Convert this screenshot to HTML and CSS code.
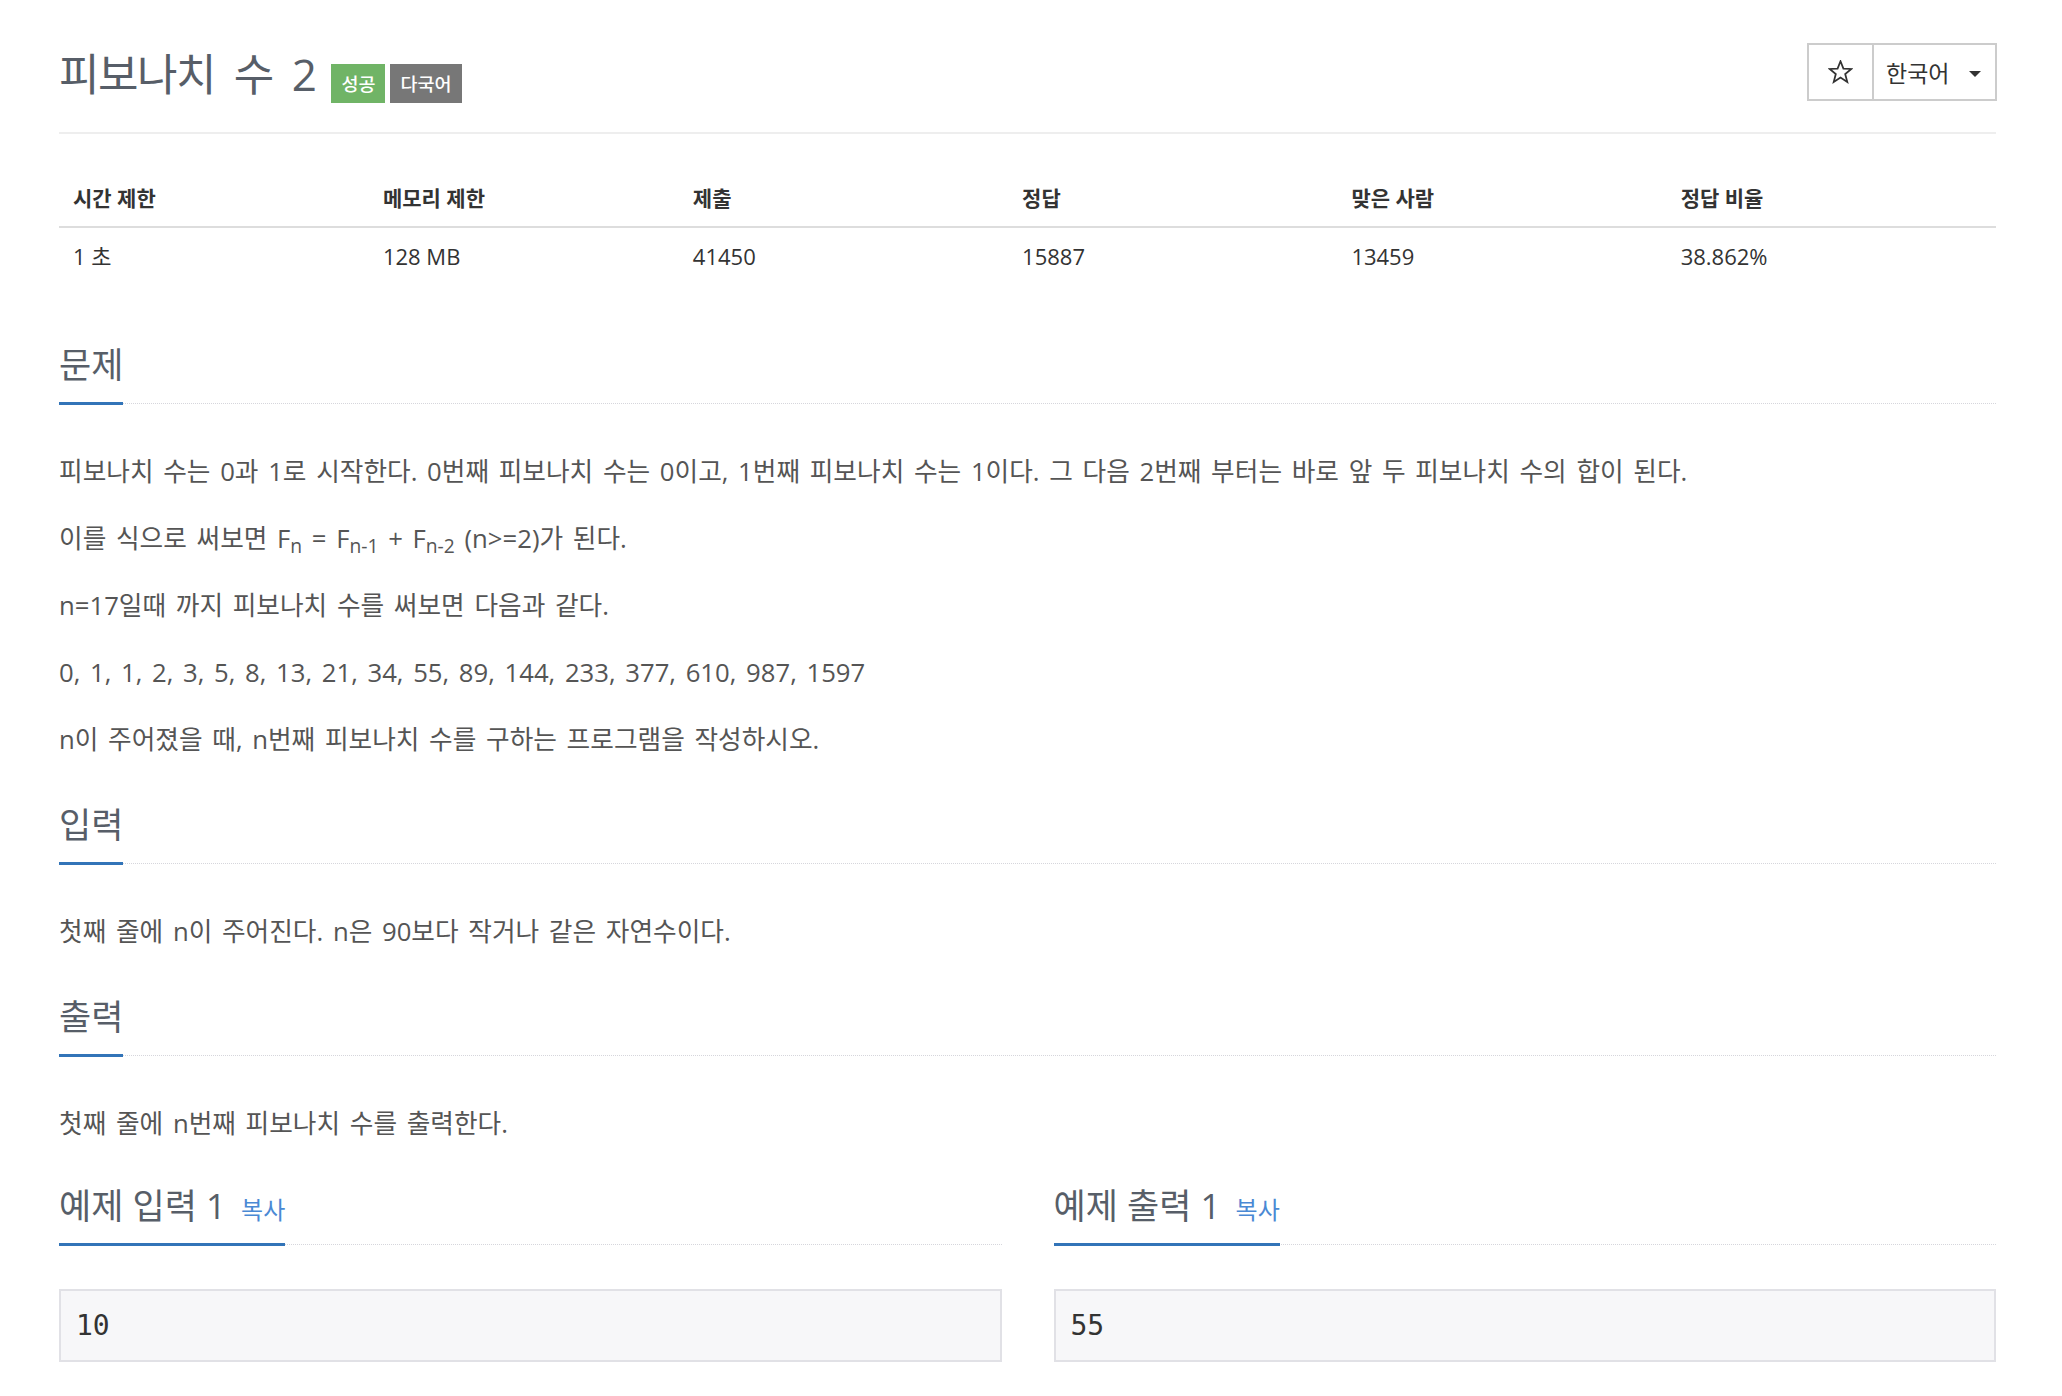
FILE: index.html
```html
<!DOCTYPE html>
<html lang="ko">
<head>
<meta charset="utf-8">
<title>피보나치 수 2</title>
<link rel="stylesheet" href="styles.css">
</head>
<body>
<div class="container">
  <div class="page-header">
    <h1 class="title">
      <span class="title-text">피보나치 수 2</span>
      <span class="badge badge-success">성공</span>
      <span class="badge badge-default">다국어</span>
    </h1>
    <div class="btn-group">
      <button class="btn btn-star" type="button" aria-label="즐겨찾기">
        <svg width="25" height="24" viewBox="0 0 24 23"><polygon points="12,1.2 14.8,8.2 22.4,8.6 16.5,13.5 18.5,21 12,16.8 5.5,21 7.5,13.5 1.6,8.6 9.2,8.2" fill="none" stroke="#333" stroke-width="1.7" stroke-linejoin="miter"/></svg>
      </button>
      <button class="btn btn-lang" type="button">한국어<span class="caret"></span></button>
    </div>
  </div>

  <table class="info">
    <thead>
      <tr>
        <th class="w16">시간 제한</th>
        <th class="w16">메모리 제한</th>
        <th class="w17">제출</th>
        <th class="w17">정답</th>
        <th class="w17">맞은 사람</th>
        <th class="w17">정답 비율</th>
      </tr>
    </thead>
    <tbody>
      <tr>
        <td>1 초</td>
        <td>128 MB</td>
        <td>41450</td>
        <td>15887</td>
        <td>13459</td>
        <td>38.862%</td>
      </tr>
    </tbody>
  </table>

  <section class="section first">
    <div class="headline"><h2>문제</h2></div>
    <div class="problem-text">
      <p>피보나치 수는 0과 1로 시작한다. 0번째 피보나치 수는 0이고, 1번째 피보나치 수는 1이다. 그 다음 2번째 부터는 바로 앞 두 피보나치 수의 합이 된다.</p>
      <p>이를 식으로 써보면 F<sub>n</sub> = F<sub>n-1</sub> + F<sub>n-2</sub> (n&gt;=2)가 된다.</p>
      <p>n=17일때 까지 피보나치 수를 써보면 다음과 같다.</p>
      <p>0, 1, 1, 2, 3, 5, 8, 13, 21, 34, 55, 89, 144, 233, 377, 610, 987, 1597</p>
      <p>n이 주어졌을 때, n번째 피보나치 수를 구하는 프로그램을 작성하시오.</p>
    </div>
  </section>

  <section class="section">
    <div class="headline"><h2>입력</h2></div>
    <div class="problem-text">
      <p>첫째 줄에 n이 주어진다. n은 90보다 작거나 같은 자연수이다.</p>
    </div>
  </section>

  <section class="section">
    <div class="headline"><h2>출력</h2></div>
    <div class="problem-text">
      <p>첫째 줄에 n번째 피보나치 수를 출력한다.</p>
    </div>
  </section>

  <div class="samples">
    <section class="sample">
      <div class="headline"><h2>예제 입력 1 <a class="copy" href="#">복사</a></h2></div>
      <pre class="sample-data">10</pre>
    </section>
    <section class="sample">
      <div class="headline"><h2>예제 출력 1 <a class="copy" href="#">복사</a></h2></div>
      <pre class="sample-data">55</pre>
    </section>
  </div>
</div>
</body>
</html>
```

FILE: styles.css
```css
* {
  box-sizing: border-box;
}

html, body {
  margin: 0;
  padding: 0;
  background: #ffffff;
}

body {
  font-family: "Open Sans", "Noto Sans CJK KR", sans-serif;
  color: #555555;
}

.container {
  margin-left: 59px;
  width: 1937px;
}

/* ---------- header ---------- */
.page-header {
  display: flex;
  justify-content: space-between;
  align-items: flex-start;
  padding: 46px 0 29px;
  border-bottom: 2px solid #eeeeee;
}

.title {
  display: flex;
  align-items: baseline;
  margin: 0;
  font-weight: 400;
}

.title-text {
  font-size: 44px;
  line-height: 56px;
  letter-spacing: -1.5px;
  word-spacing: 9px;
  color: #575e68;
}

.badge {
  display: inline-block;
  height: 39px;
  line-height: 39px;
  padding: 0 10px;
  font-size: 18.5px;
  font-weight: 500;
  color: #ffffff;
  margin-left: 5px;
}

.badge-success {
  background: #70b466;
  margin-left: 16px;
}

.badge-default {
  background: #777777;
}

.btn-group {
  display: flex;
  margin-top: -3px;
  margin-right: -1px;
  border: 2px solid #cccccc;
  height: 58px;
}

.btn {
  display: flex;
  align-items: center;
  justify-content: center;
  background: #ffffff;
  border: none;
  margin: 0;
  padding: 0;
  font-family: "Open Sans", "Noto Sans CJK KR", sans-serif;
  color: #333333;
  cursor: pointer;
}

.btn-star {
  width: 65px;
  border-right: 2px solid #cccccc;
}

.btn-lang {
  width: 121px;
  padding: 0 14px 0 12px;
  justify-content: space-between;
  font-size: 23px;
}

.caret {
  width: 0;
  height: 0;
  border-left: 6px solid transparent;
  border-right: 6px solid transparent;
  border-top: 6px solid #333333;
  margin-top: 3px;
}

/* ---------- info table ---------- */
.info {
  width: 100%;
  margin-top: 36px;
  border-collapse: separate;
  border-spacing: 0;
  table-layout: fixed;
  color: #333333;
}

.w16 { width: 16%; }
.w17 { width: 17%; }

.info th {
  text-align: left;
  font-size: 21px;
  font-weight: 700;
  line-height: 26px;
  padding: 15px 14px;
  border-bottom: 2px solid #dddddd;
}

.info td {
  font-size: 22px;
  line-height: 29px;
  padding: 14px 14px;
  color: #333333;
}

/* ---------- sections ---------- */
.section {
  margin-top: 44px;
}

.section.first {
  margin-top: 58px;
}

.headline {
  display: flex;
  border-bottom: 1px dotted #d6d6dc;
}

.headline h2 {
  margin: 0 0 -2px;
  font-size: 35px;
  font-weight: 400;
  line-height: 44px;
  padding-bottom: 15px;
  color: #575e68;
  border-bottom: 3px solid #3274b8;
}

.problem-text {
  margin-top: 48px;
  font-size: 25.7px;
  line-height: 39px;
  word-spacing: 3px;
  color: #555555;
}

.problem-text p {
  margin: 0 0 28px;
}

.problem-text p:last-child {
  margin-bottom: 0;
}

sub {
  position: relative;
  font-size: 75%;
  line-height: 0;
  vertical-align: baseline;
  bottom: -0.25em;
}

/* ---------- samples ---------- */
.samples {
  display: grid;
  grid-template-columns: 1fr 1fr;
  column-gap: 52px;
  margin-top: 41px;
}

.copy {
  font-size: 24px;
  line-height: 1;
  color: #4a89d4;
  text-decoration: none;
  margin-left: 6px;
}

.sample-data {
  margin: 44px 0 0;
  padding: 14px 15px;
  border: 2px solid #e1e1e6;
  background: #f7f7f9;
  font-family: "DejaVu Sans Mono", "Liberation Mono", monospace;
  font-size: 28px;
  line-height: 41px;
  color: #333333;
}
```
